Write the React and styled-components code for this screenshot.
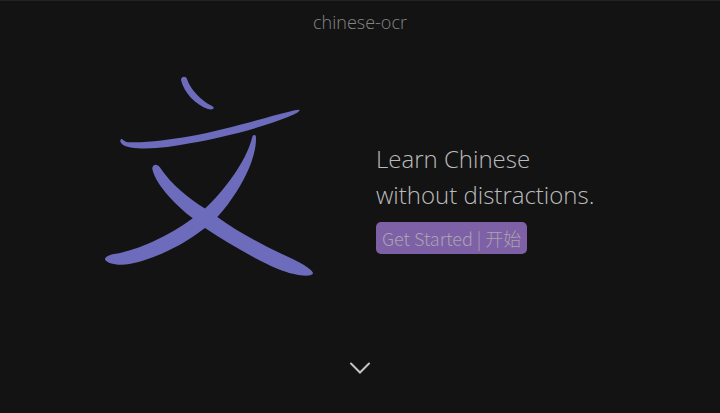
import React from "react";
import styled, { createGlobalStyle } from "styled-components";

const GlobalStyle = createGlobalStyle`
  *, *::before, *::after { box-sizing: border-box; }
  body {
    margin: 0;
    background: #131313;
    color: #bbb;
    font-family: "Open Sans", "Noto Sans", sans-serif;
    font-weight: 300;
  }
`;

const Page = styled.div`
  display: flex;
  flex-direction: column;
  min-height: 100vh;
  border-top: 1px solid #222;
`;

const Header = styled.header`
  display: flex;
  justify-content: center;
  padding-top: 8px;
`;

const Brand = styled.a`
  color: #858585;
  font-size: 18px;
  line-height: 26px;
  text-decoration: none;
`;

const Hero = styled.main`
  flex: 1;
  display: grid;
  grid-template-columns: 1fr 1fr;
  column-gap: 62px;
  align-items: start;
  padding: 40px 30px 0 0;
`;

const Glyph = styled.svg`
  width: 210px;
  height: 202px;
  justify-self: end;
  fill: #6d6bbb;
`;

const Pitch = styled.section`
  display: flex;
  flex-direction: column;
  align-items: flex-start;
  gap: 9px;
  padding-top: 66px;
`;

const Headline = styled.h1`
  margin: 0;
  font-size: 24px;
  line-height: 36px;
  font-weight: 300;
`;

const StartButton = styled.button`
  padding: 0 6px;
  border: 0;
  border-radius: 5px;
  background: #7d60a6;
  color: #a9a4ae;
  font-family: "Noto Sans CJK SC", sans-serif;
  font-size: 18px;
  font-weight: 300;
  line-height: 32px;
  cursor: pointer;
`;

const More = styled.button`
  align-self: center;
  display: flex;
  margin-bottom: 37px;
  padding: 0;
  border: 0;
  background: none;
  color: #c4c4c4;
  cursor: pointer;
`;

const strokes = [
  "M181 80C181 76 186 75.500 187 79C190 88 197 96 207 103.300C210 105 213 106 213.700 107.500C214 109.500 211 110 208 109C196 105 184 93 181 80Z",
  "M121.700 139C123 139 124 142 128 142.200C147 143 168 140 190 136.300C225 130 263 118 290 111.500C295 110.300 299 109 299.700 110.300C299 112.500 292 115.500 288 117C258 129 220 138 190 143.300C174 146.500 158 148.700 142 148.400C131 148 122 147 120.300 141.500C120.300 140 120.500 139 121.700 139Z",
  "M254.300 135C256 135 256 136.500 256 139C256 153 249 171 240 186C231 201 223 211 217.300 217L205 228C183 245 163 254 145 260C133 264 124 265 118 264.700C110 264.300 104.800 261 105 259C105.500 256 111 254.500 116 253.800C138 250 169 236 192.700 218.300L205 208.500C214 200 224 189 233 176C242 163 249 150 252 138C252.500 136 253 135 254.300 135Z",
  "M152.300 169C152 164.500 157 163 160 167.500C171 184 188 198 205 208.500L217.300 217C232 228 250 238 267 246.700C280 253.500 294 259 304 265C310 269 313 271.500 313 273.500C311 276.500 302 276 294 274C274 270 237 249 205 228L192.700 218.300C178 207 156 186 152.300 169Z",
];

export default function App() {
  return (
    <>
      <GlobalStyle />
      <Page>
        <Header>
          <Brand href="#">chinese-ocr</Brand>
        </Header>
        <Hero>
          <Glyph viewBox="104 75 210 202" role="img" aria-label="文">
            {strokes.map((d) => (
              <path key={d} d={d} />
            ))}
          </Glyph>
          <Pitch>
            <Headline>
              Learn Chinese
              <br />
              without distractions.
            </Headline>
            <StartButton type="button">Get Started | 开始</StartButton>
          </Pitch>
        </Hero>
        <More type="button" aria-label="Scroll down">
          <svg width="22" height="16" viewBox="0 0 22 16" fill="none" stroke="currentColor" strokeWidth="2">
            <path d="M2 3.500L11 12.500L20 3.500" strokeLinecap="round" />
          </svg>
        </More>
      </Page>
    </>
  );
}
